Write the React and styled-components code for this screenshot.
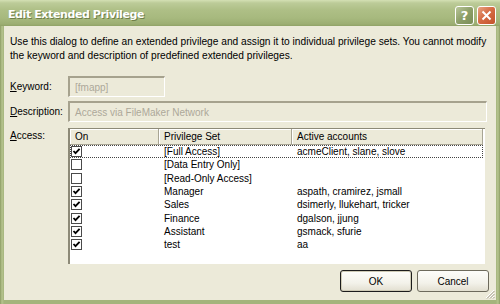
import React from 'react'
import styled, { createGlobalStyle } from 'styled-components'

const GlobalStyle = createGlobalStyle`
    html, body {
        margin: 0;
        padding: 0;
        background: #ffffff;
    }
    body {
        font-family: "Liberation Sans", Arial, sans-serif;
        font-size: 10px;
        color: #000;
    }
`

const rows = [
    { on: true, name: '[Full Access]', accounts: 'acmeClient, slane, slove', focus: true },
    { on: false, name: '[Data Entry Only]', accounts: '' },
    { on: false, name: '[Read-Only Access]', accounts: '' },
    { on: true, name: 'Manager', accounts: 'aspath, cramirez, jsmall' },
    { on: true, name: 'Sales', accounts: 'dsimerly, llukehart, tricker' },
    { on: true, name: 'Finance', accounts: 'dgalson, jjung' },
    { on: true, name: 'Assistant', accounts: 'gsmack, sfurie' },
    { on: true, name: 'test', accounts: 'aa' },
]

function CheckBox({ checked }) {
    return (
        <Box>
            {checked && (
                <svg width="9" height="9" viewBox="0 0 9 9">
                    <path d="M1.5 4 L3.5 6.2 L7.6 1.8" stroke="#000" strokeWidth="1.8" fill="none" />
                </svg>
            )}
        </Box>
    )
}

function App() {
    return (
        <>
            <GlobalStyle />
            <Window>
                <TitleBar>
                    <Title>Edit Extended Privilege</Title>
                    <TitleButtons>
                        <CaptionButton>?</CaptionButton>
                        <CaptionButton close>
                            <svg width="11" height="11" viewBox="0 0 11 11">
                                <path d="M1.5 1.5 L9.5 9.5 M9.5 1.5 L1.5 9.5" stroke="#fff" strokeWidth="2" />
                            </svg>
                        </CaptionButton>
                    </TitleButtons>
                </TitleBar>
                <Body>
                    <Intro>
                        Use this dialog to define an extended privilege and assign it to individual privilege sets. You cannot modify<br />
                        the keyword and description of predefined extended privileges.
                    </Intro>
                    <FieldRow>
                        <Label><u>K</u>eyword:</Label>
                        <Field width="97px">[fmapp]</Field>
                    </FieldRow>
                    <FieldRow>
                        <Label><u>D</u>escription:</Label>
                        <Field>Access via FileMaker Network</Field>
                    </FieldRow>
                    <AccessRow>
                        <Label top><u>A</u>ccess:</Label>
                        <Table>
                            <HeaderRow>
                                <HeaderCell width="89px">On</HeaderCell>
                                <HeaderCell width="133px">Privilege Set</HeaderCell>
                                <HeaderCell grow>Active accounts</HeaderCell>
                            </HeaderRow>
                            {rows.map((r) => (
                                <Row key={r.name} focus={r.focus}>
                                    <Cell width="89px"><CheckBox checked={r.on} /></Cell>
                                    <Cell width="133px">{r.name}</Cell>
                                    <Cell grow>{r.accounts}</Cell>
                                </Row>
                            ))}
                        </Table>
                    </AccessRow>
                    <Buttons>
                        <Button primary>OK</Button>
                        <Button>Cancel</Button>
                    </Buttons>
                    <Grip>
                        <svg width="11" height="11" viewBox="0 0 11 11">
                            <path d="M10 2 L2 10 M10 5 L5 10 M10 8 L8 10" stroke="#fff" strokeWidth="1" />
                            <path d="M10.5 3 L3 10.5 M10.5 6 L6 10.5 M10.5 9 L9 10.5" stroke="#a39f8c" strokeWidth="1" />
                        </svg>
                    </Grip>
                </Body>
            </Window>
        </>
    )
}

export default App;

//WINDOW
const Window = styled.div`
    width: 500px;
    height: 304px;
    display: flex;
    flex-direction: column;
    box-sizing: border-box;
    background: linear-gradient(90deg, #8c9c64 0, #b6c48e 2px, #a4b47c 4px, #a4b47c 496px, #b6c48e 498px, #8c9c64 500px);
`
const TitleBar = styled.div`
    height: 26px;
    flex: none;
    display: flex;
    align-items: center;
    justify-content: space-between;
    padding: 0 4px 0 8px;
    background: linear-gradient(180deg, #d4e0b4 0, #bccb98 3px, #aebf86 10px, #a7b97e 18px, #9cae72 24px, #90a266 26px);
`
const Title = styled.div`
    font-family: "DejaVu Sans", Verdana, sans-serif;
    font-weight: bold;
    font-size: 11px;
    color: #fff;
    letter-spacing: -0.4px;
    text-shadow: 1px 1px 0 #6f7f48;
    margin-top: 2px;
`
const TitleButtons = styled.div`
    display: flex;
    gap: 3px;
    margin-top: 4px;
`
const CaptionButton = styled.div`
    width: 19px;
    height: 19px;
    box-sizing: border-box;
    border: 1px solid #fff;
    border-radius: 3px;
    display: flex;
    align-items: center;
    justify-content: center;
    color: #fff;
    font-family: "DejaVu Sans", sans-serif;
    font-weight: bold;
    font-size: 13px;
    background: ${(p) => (p.close
        ? 'linear-gradient(135deg, #e8a584 0, #d66c45 45%, #c4532c 100%)'
        : 'linear-gradient(135deg, #b9c69a 0, #8d9f68 50%, #7b8e58 100%)')};
`
//BODY
const Body = styled.div`
    position: relative;
    flex: 1;
    margin: 0 4px 4px 4px;
    background: #ecead9;
    padding: 9px 6px 0 6px;
    display: flex;
    flex-direction: column;
`
const Intro = styled.div`
    font-size: 10.2px;
    line-height: 14px;
    white-space: nowrap;
    margin-bottom: 13px;
`
const FieldRow = styled.div`
    display: flex;
    align-items: center;
    margin-bottom: 4px;
`
const Label = styled.div`
    width: 58px;
    flex: none;
    align-self: ${(p) => (p.top ? 'flex-start' : 'center')};
    margin-top: ${(p) => (p.top ? '2px' : '0')};
`
const Field = styled.div`
    box-sizing: border-box;
    width: ${(p) => p.width || '419px'};
    height: 21px;
    padding: 0 5px;
    display: flex;
    align-items: center;
    color: #aca899;
    border-top: 2px solid #a6a28e;
    border-left: 2px solid #a6a28e;
    border-bottom: 1px solid #fff;
    border-right: 1px solid #fff;
    background: #ecead9;
`
const AccessRow = styled.div`
    display: flex;
    margin-top: 2px;
`
const Table = styled.div`
    box-sizing: border-box;
    width: 417px;
    height: 136px;
    background: #fff;
    border-top: 1px solid #8d8a78;
    border-left: 2px solid #8d8a78;
    display: flex;
    flex-direction: column;
`
const HeaderRow = styled.div`
    display: flex;
    flex: none;
    height: 15px;
    background: #ecead9;
    margin-right: 2px;
    border-bottom: 1px solid #a8a594;
    border-right: 1px solid #a8a594;
`
const HeaderCell = styled.div`
    box-sizing: border-box;
    width: ${(p) => p.width || 'auto'};
    flex: ${(p) => (p.grow ? '1' : 'none')};
    padding-left: 5px;
    display: flex;
    align-items: center;
    border-right: ${(p) => (p.grow ? 'none' : '1px solid #a8a594')};
    box-shadow: inset 1px 1px 0 #fff;
`
const Row = styled.div`
    display: flex;
    flex: none;
    height: 13.3px;
    box-sizing: border-box;
    margin-right: 2px;
    border: 1px dotted ${(p) => (p.focus ? '#444' : 'transparent')};
`
const Cell = styled.div`
    width: ${(p) => p.width || 'auto'};
    flex: ${(p) => (p.grow ? '1' : 'none')};
    box-sizing: border-box;
    padding-left: 4px;
    display: flex;
    align-items: center;
    white-space: nowrap;
    &:first-child {
        padding-left: 0;
    }
`
const Box = styled.div`
    width: 11px;
    height: 11px;
    box-sizing: border-box;
    border: 1px solid #4a4a4a;
    background: #fff;
    display: flex;
    align-items: center;
    justify-content: center;
`
//BUTTONS
const Buttons = styled.div`
    display: flex;
    justify-content: flex-end;
    gap: 5px;
    margin-top: 6px;
    padding-right: 1px;
`
const Button = styled.div`
    width: 72px;
    height: 22px;
    box-sizing: border-box;
    border: 1px solid ${(p) => (p.primary ? '#1c1c1c' : '#6d6a5c')};
    border-radius: 3px;
    display: flex;
    align-items: center;
    justify-content: center;
    background: linear-gradient(180deg, #fdfdfa 0, #f3f2ea 60%, #e2dfd0 100%);
    box-shadow: ${(p) => (p.primary ? 'inset 0 0 0 1px #cfcbb6' : 'none')};
`
const Grip = styled.div`
    position: absolute;
    right: 1px;
    bottom: 1px;
    width: 11px;
    height: 11px;
`
